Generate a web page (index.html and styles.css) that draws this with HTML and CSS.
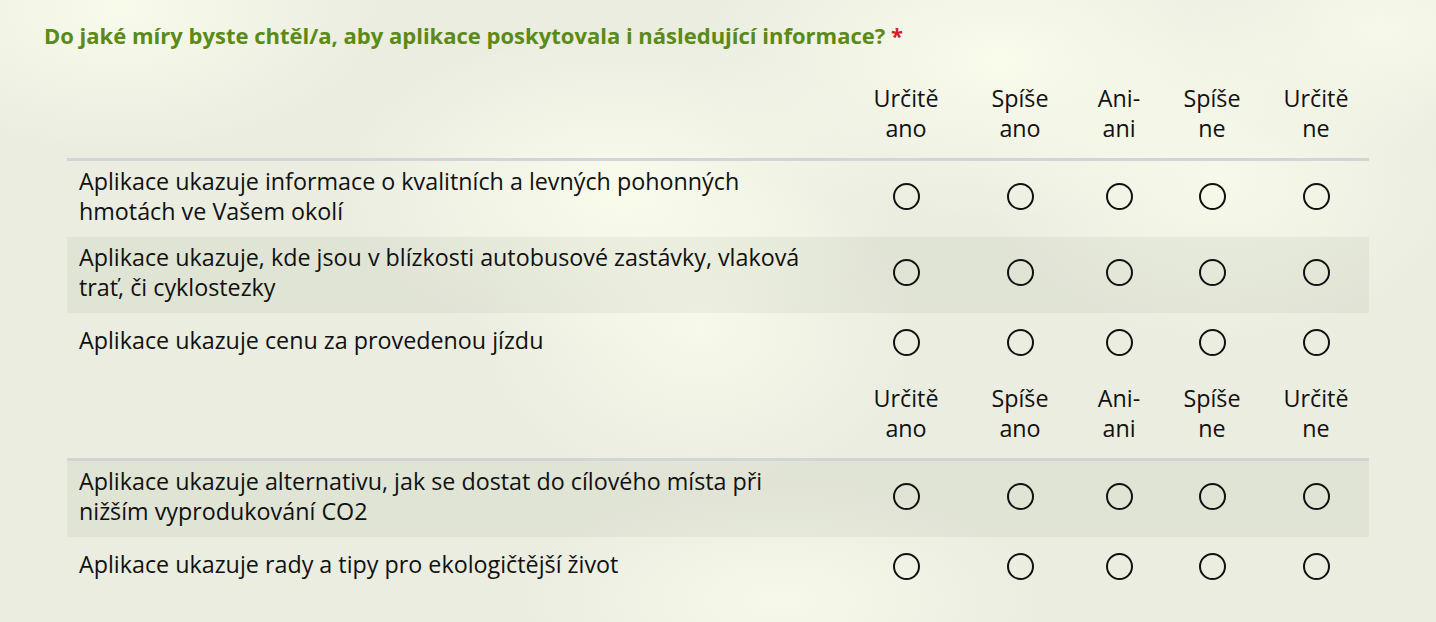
FILE: index.html
```html
<!DOCTYPE html>
<html lang="cs">
<head>
<meta charset="utf-8">
<title>Dotazník</title>
<link rel="stylesheet" href="styles.css">
</head>
<body>
<div class="page">
  <h2 class="question">Do jaké míry byste chtěl/a, aby aplikace poskytovala i následující informace? <span class="req">*</span></h2>
  <table class="matrix">
    <colgroup>
      <col class="c-label">
      <col class="c-1">
      <col class="c-2">
      <col class="c-3">
      <col class="c-4">
      <col class="c-5">
    </colgroup>
    <tr class="head">
      <th></th>
      <th>Určitě ano</th>
      <th>Spíše ano</th>
      <th>Ani-ani</th>
      <th>Spíše ne</th>
      <th>Určitě ne</th>
    </tr>
    <tr>
      <td class="label">Aplikace ukazuje informace o kvalitních a levných pohonných hmotách ve Vašem okolí</td>
      <td class="opt"><input type="radio" name="q1"></td>
      <td class="opt"><input type="radio" name="q1"></td>
      <td class="opt"><input type="radio" name="q1"></td>
      <td class="opt"><input type="radio" name="q1"></td>
      <td class="opt"><input type="radio" name="q1"></td>
    </tr>
    <tr class="shade">
      <td class="label">Aplikace ukazuje, kde jsou v blízkosti autobusové zastávky, vlaková trať, či cyklostezky</td>
      <td class="opt"><input type="radio" name="q2"></td>
      <td class="opt"><input type="radio" name="q2"></td>
      <td class="opt"><input type="radio" name="q2"></td>
      <td class="opt"><input type="radio" name="q2"></td>
      <td class="opt"><input type="radio" name="q2"></td>
    </tr>
    <tr class="single">
      <td class="label">Aplikace ukazuje cenu za provedenou jízdu</td>
      <td class="opt"><input type="radio" name="q3"></td>
      <td class="opt"><input type="radio" name="q3"></td>
      <td class="opt"><input type="radio" name="q3"></td>
      <td class="opt"><input type="radio" name="q3"></td>
      <td class="opt"><input type="radio" name="q3"></td>
    </tr>
    <tr class="head">
      <th></th>
      <th>Určitě ano</th>
      <th>Spíše ano</th>
      <th>Ani-ani</th>
      <th>Spíše ne</th>
      <th>Určitě ne</th>
    </tr>
    <tr class="shade">
      <td class="label">Aplikace ukazuje alternativu, jak se dostat do cílového místa při nižším vyprodukování CO2</td>
      <td class="opt"><input type="radio" name="q4"></td>
      <td class="opt"><input type="radio" name="q4"></td>
      <td class="opt"><input type="radio" name="q4"></td>
      <td class="opt"><input type="radio" name="q4"></td>
      <td class="opt"><input type="radio" name="q4"></td>
    </tr>
    <tr class="single">
      <td class="label">Aplikace ukazuje rady a tipy pro ekologičtější život</td>
      <td class="opt"><input type="radio" name="q5"></td>
      <td class="opt"><input type="radio" name="q5"></td>
      <td class="opt"><input type="radio" name="q5"></td>
      <td class="opt"><input type="radio" name="q5"></td>
      <td class="opt"><input type="radio" name="q5"></td>
    </tr>
  </table>
</div>
</body>
</html>
```
FILE: styles.css
```css
html, body {
  margin: 0;
  padding: 0;
}
body {
  width: 1436px;
  height: 622px;
  overflow: hidden;
  font-family: "Open Sans", "Noto Sans", sans-serif;
  color: #111;
  background-color: #eaede0;
  background-image:
    radial-gradient(ellipse 260px 140px at 120px 10px, rgba(250,252,236,0.9), rgba(250,252,236,0) 100%),
    radial-gradient(ellipse 280px 160px at 620px 190px, rgba(250,252,236,0.95), rgba(250,252,236,0) 100%),
    radial-gradient(ellipse 220px 160px at 700px 330px, rgba(250,252,236,0.8), rgba(250,252,236,0) 100%),
    radial-gradient(ellipse 300px 160px at 1000px 60px, rgba(250,252,236,0.95), rgba(250,252,236,0) 100%),
    radial-gradient(ellipse 240px 160px at 1220px 180px, rgba(250,252,236,0.8), rgba(250,252,236,0) 100%),
    radial-gradient(ellipse 260px 120px at 780px 600px, rgba(250,252,236,0.8), rgba(250,252,236,0) 100%),
    radial-gradient(ellipse 200px 120px at 1380px 30px, rgba(250,252,236,0.8), rgba(250,252,236,0) 100%);
}
.page {
  padding: 20px 67px 0 44px;
}
.question {
  margin: 0 0 19px 0;
  font-size: 22px;
  line-height: 30px;
  font-weight: 700;
  color: #5b8a16;
}
.req {
  color: #d2202c;
}
.matrix {
  margin-left: 23px;
  width: 1302px;
  border-collapse: collapse;
  table-layout: fixed;
  font-size: 23.3px;
  line-height: 30px;
}
.c-label { width: 782px; }
.c-1 { width: 114px; }
.c-2 { width: 114px; }
.c-3 { width: 84px; }
.c-4 { width: 102px; }
.c-5 { width: 106px; }
.head th {
  font-weight: 400;
  text-align: center;
  padding: 14px 10px 15px;
  border-bottom: 3px solid #d1d5d8;
}
.matrix td {
  padding: 5px 12px 11px;
  vertical-align: middle;
}
.matrix td.label {
  padding-right: 29px;
  text-align: left;
}
.matrix td.opt {
  padding-top: 3px;
  padding-bottom: 13px;
  text-align: center;
}
.matrix tr.single td {
  height: 40px;
  padding-top: 7px;
  padding-bottom: 9px;
}
.shade td {
  background: rgba(60, 70, 40, 0.055);
}
.opt input {
  -webkit-appearance: none;
  appearance: none;
  width: 27px;
  height: 27px;
  margin: 0;
  border: 2px solid #111;
  border-radius: 50%;
  background: transparent;
  vertical-align: middle;
}
```
